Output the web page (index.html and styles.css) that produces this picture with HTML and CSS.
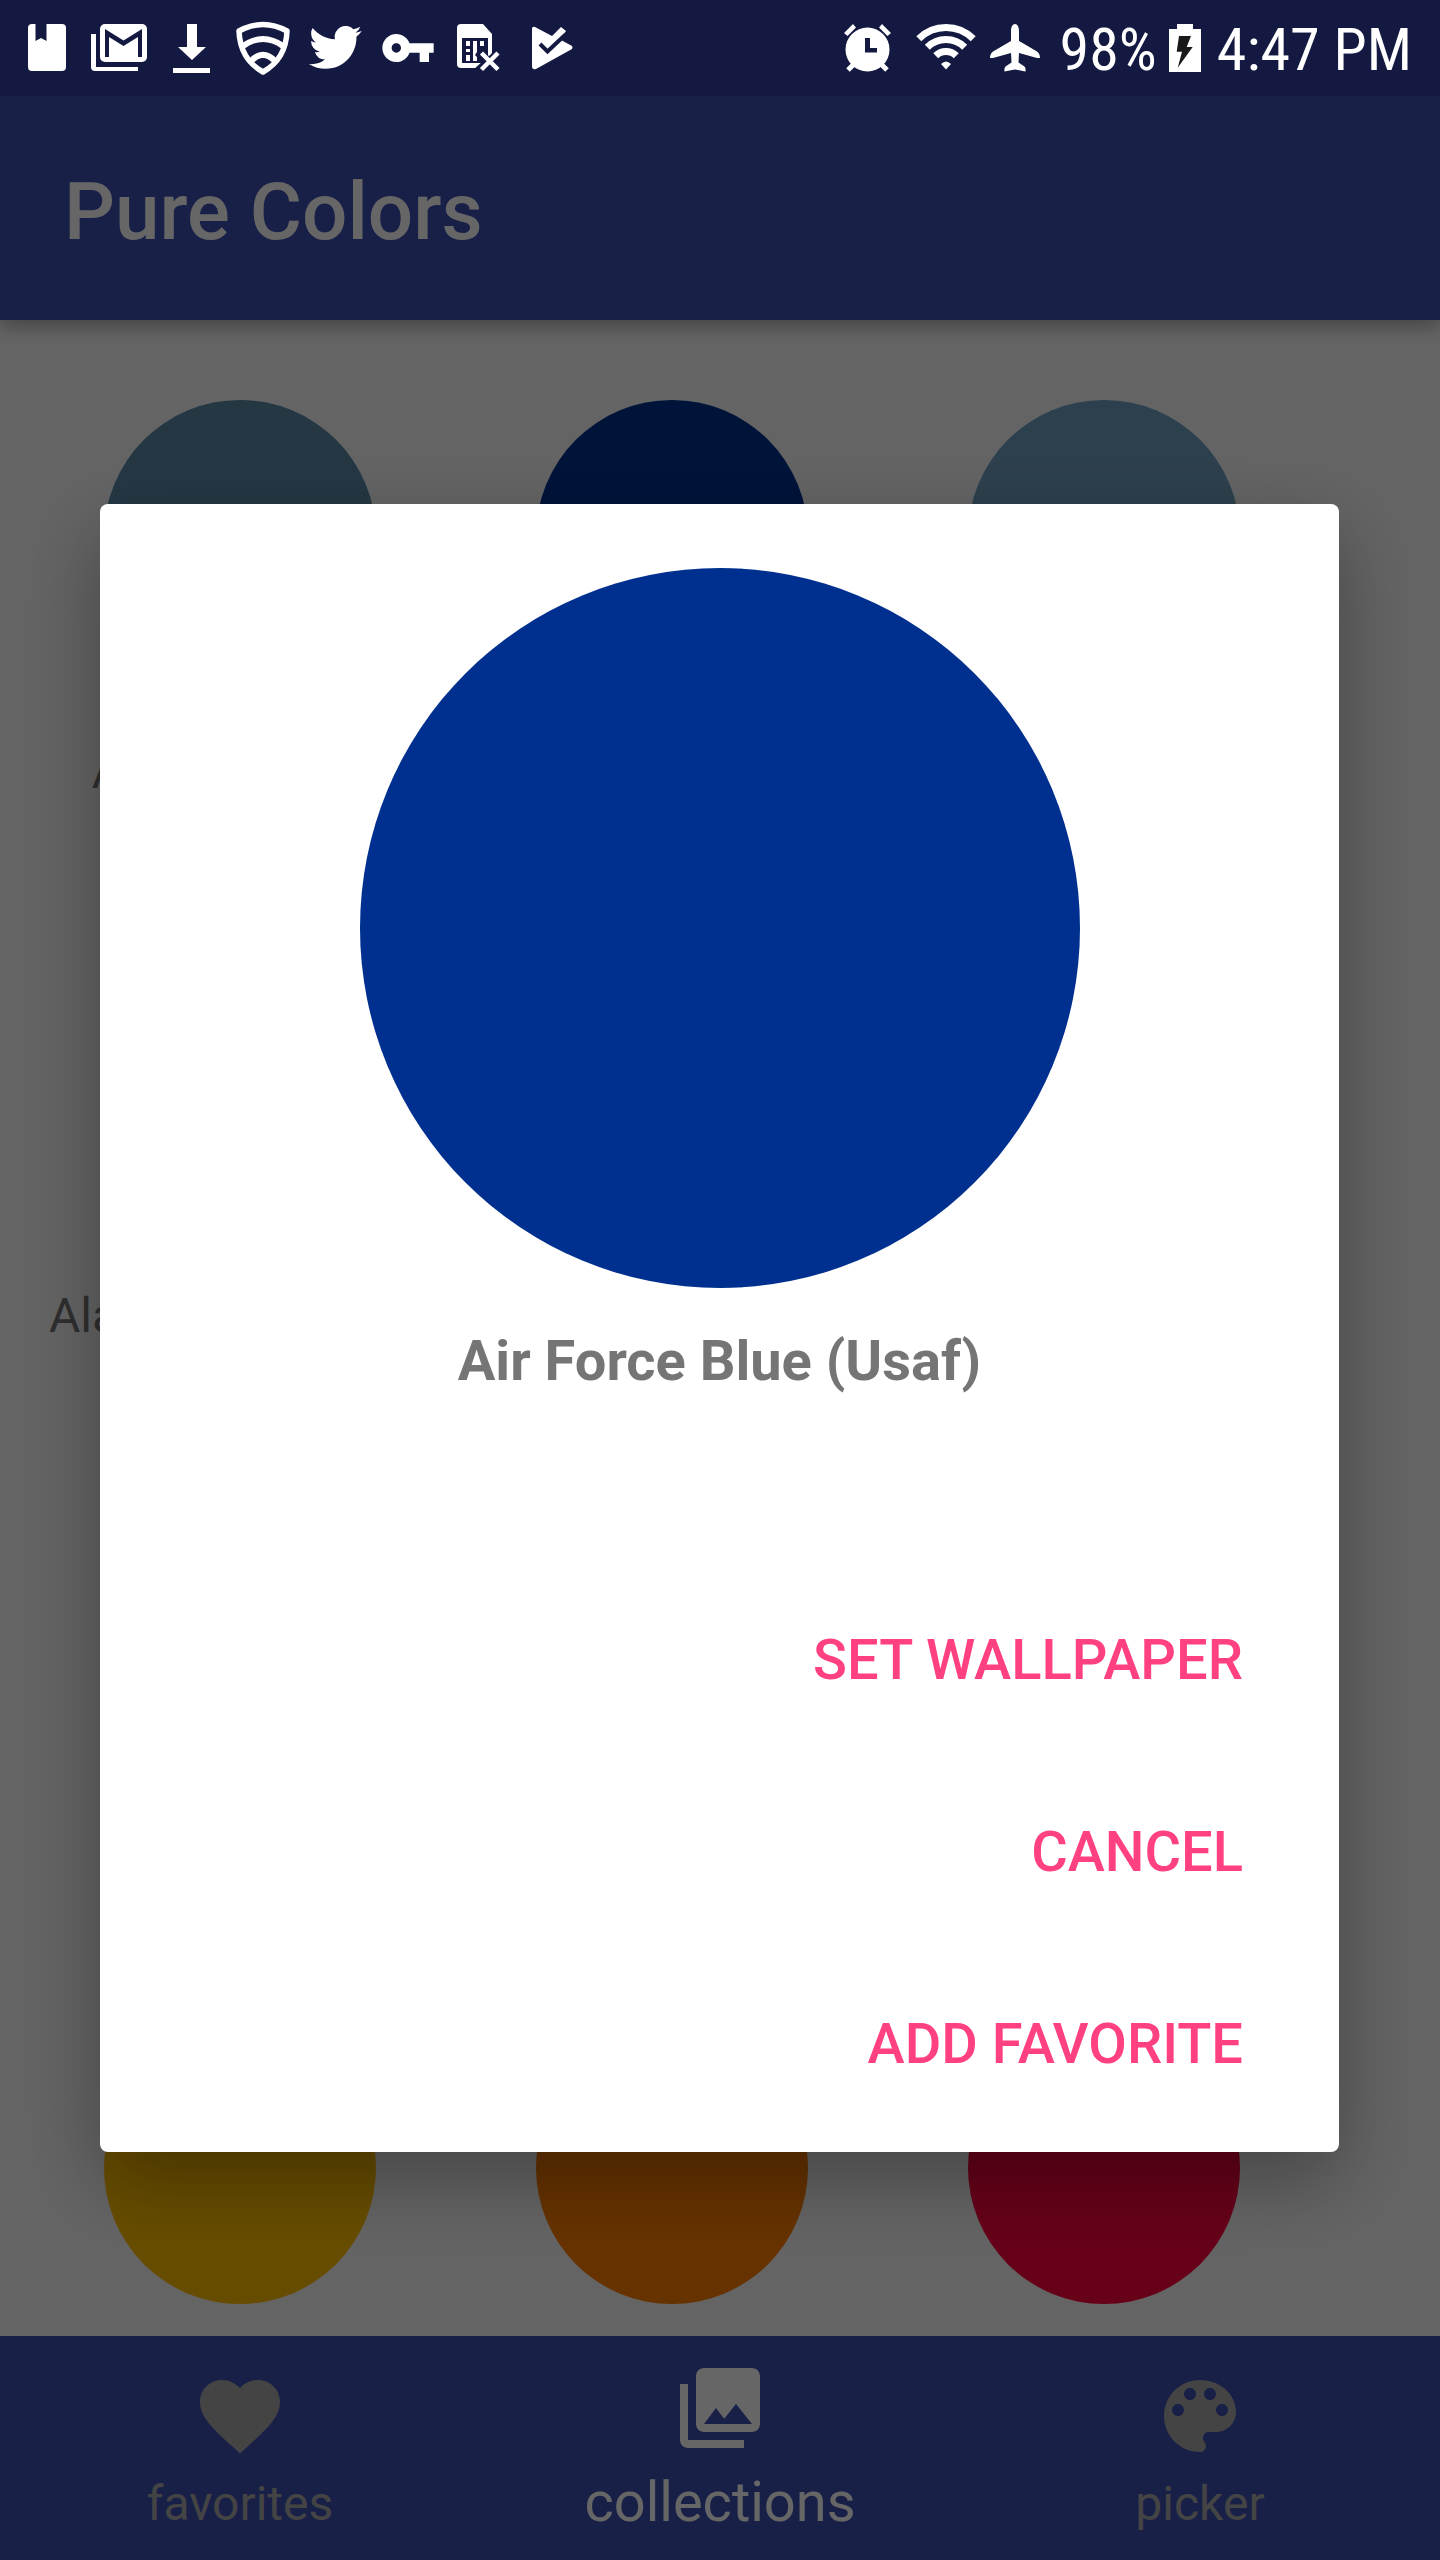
FILE: index.html
```html
<!DOCTYPE html>
<html lang="en">
<head>
<meta charset="utf-8">
<meta name="viewport" content="width=device-width, initial-scale=1">
<title>Pure Colors</title>
<link rel="stylesheet" href="styles.css">
</head>
<body>
<div class="app">
  <div class="status-bar">
    <div class="status-notifications">
      <svg class="status-icon" viewBox="0 0 56 56"><path d="M12 4H15.500V21L21 18L26.500 21V4H42Q46 4 46 8V47Q46 51 42 51H12Q8 51 8 47V8Q8 4 12 4Z"/></svg>
      <svg class="status-icon" viewBox="0 0 56 56"><rect x="8" y="4" width="47" height="38" rx="5"/><path d="M-1 14H4V47H46V51H3Q-1 51 -1 47Z"/><path class="cutout" d="M13 37V9L31.500 20.500L50 9V37H46V17L31.500 26L17 17V37Z"/></svg>
      <svg class="status-icon" viewBox="0 0 56 56"><path d="M23 4H33V27H42L28 40L14 27H23ZM9 48H46V53H9Z"/></svg>
      <svg class="status-icon" viewBox="0 0 56 56"><path class="line" stroke-width="5.500" stroke-linejoin="round" d="M3 11Q27 -2 51 11Q50 39 27 52Q4 39 3 11Z"/><path class="line" stroke-width="6" d="M7 26Q27 12 47 26M15 41Q27 29 39 41"/></svg>
      <svg class="status-icon" viewBox="0 0 56 56"><path transform="translate(1 1) scale(2.2)" d="M23.953 4.57a10 10 0 01-2.825.775 4.958 4.958 0 002.163-2.723c-.951.555-2.005.959-3.127 1.184a4.92 4.92 0 00-8.384 4.482C7.69 8.095 4.067 6.13 1.64 3.162a4.822 4.822 0 00-.666 2.475c0 1.71.87 3.213 2.188 4.096a4.904 4.904 0 01-2.228-.616v.06a4.923 4.923 0 003.946 4.827 4.996 4.996 0 01-2.212.085 4.936 4.936 0 004.604 3.417 9.867 9.867 0 01-6.102 2.105c-.39 0-.779-.023-1.17-.067a13.995 13.995 0 007.557 2.209c9.053 0 13.998-7.496 13.998-13.985 0-.21 0-.42-.015-.63A9.935 9.935 0 0024 4.59z"/></svg>
      <svg class="status-icon" viewBox="0 0 24 24"><path d="M12.650 10C11.830 7.670 9.610 6 7 6c-3.310 0-6 2.690-6 6s2.690 6 6 6c2.610 0 4.830-1.670 5.650-4H17v4h4v-4h2v-4H12.650zM7 14c-1.100 0-2-.9-2-2s.9-2 2-2 2 .9 2 2-.9 2-2 2z"/></svg>
      <svg class="status-icon" viewBox="0 0 56 56"><path d="M9 4H31L40 14V48H9Q5 48 5 44V8Q5 4 9 4Z"/><path class="cutout" d="M10 18H36V43H10Z"/><path d="M14 21H18V26H14ZM14 29H18V32H14ZM14 35H18V41H14ZM21 21H25V32L23 35L25 37V41H21ZM28 21H32V26H28Z"/><path class="cutout" d="M21 50L32 40L28 34L30 30L37 36L42 31V50Z"/><path class="line" stroke-width="4.500" d="M29.500 33L46 49.500M46 33L29.500 49.500"/></svg>
      <svg class="status-icon" viewBox="0 0 56 56"><path d="M8 9Q8 6 11 7L28 16L37 7L42 11L36 19L38 20.500L48 26Q49 27.500 48 29L12 49Q8 50 8 46Z"/><path class="gap-line" stroke-width="4" d="M16 24L23.500 31.500L41 15"/></svg>
    </div>
    <div class="status-system">
      <svg class="alarm" viewBox="0 0 48 48"><circle cx="23.500" cy="25.500" r="22"/><path d="M0 9L9 0L12 3.500L3.500 12ZM47 9L38 0L35 3.500L43.500 12Z"/><path class="line" stroke-width="5" d="M10 40L4 46M37 40L43 46"/><path class="cutout" d="M21 14H26V24H33V28.500H21Z"/></svg>
      <svg class="wifi" viewBox="0 0 60 48"><path class="line" stroke-width="7" d="M2.800 14.800A38.500 38.500 0 0 1 57.200 14.800M11.300 23.300A26.500 26.500 0 0 1 48.700 23.300M19.750 31.750A14.500 14.500 0 0 1 40.250 31.750"/><path d="M25 40Q30 35 35 40L30 45.500Z"/></svg>
      <svg class="plane" viewBox="0 0 50 48"><path d="M25 0C27.500 0 29 3 29 7V17L47 27.500Q50 29.500 50 34L47 34L29 29L28.500 38.500L34.500 42.500Q36 44 35.500 47.500L25 45.500L14.500 47.500Q14 44 15.500 42.500L21.500 38.500L21 29L3 34L0 34Q0 29.500 3 27.500L21 17V7C21 3 22.500 0 25 0Z"/></svg>
      <span class="status-text">98%</span>
      <svg class="battery" viewBox="0 0 32 48"><path d="M8 0H24V5H32V48H0V5H8Z"/><path class="bolt" d="M10 12H22L17.700 23H23.700L8.700 43.700L13 27.700H7.700Z"/></svg>
      <time class="status-text">4:47 PM</time>
    </div>
  </div>

  <header class="toolbar"><h1>Pure Colors</h1></header>

  <main class="colors">
    <figure class="color"><span class="swatch raf"></span><figcaption>Air Force Blue (Raf)</figcaption></figure>
    <figure class="color"><span class="swatch usaf"></span><figcaption>Air Force Blue (Usaf)</figcaption></figure>
    <figure class="color"><span class="swatch superiority"></span><figcaption>Air Superiority Blue</figcaption></figure>
    <figure class="color"><span class="swatch alabama"></span><figcaption>Alabama Crimson</figcaption></figure>
    <figure class="color"><span class="swatch alice"></span><figcaption>Alice Blue</figcaption></figure>
    <figure class="color"><span class="swatch alizarin"></span><figcaption>Alizarin Crimson</figcaption></figure>
    <figure class="color"><span class="swatch alloy"></span><figcaption>Alloy Orange</figcaption></figure>
    <figure class="color"><span class="swatch almond"></span><figcaption>Almond</figcaption></figure>
    <figure class="color"><span class="swatch amaranth"></span><figcaption>Amaranth</figcaption></figure>
    <figure class="color"><span class="swatch amber"></span><figcaption>Amber</figcaption></figure>
    <figure class="color"><span class="swatch sae"></span><figcaption>Amber (Sae/Ece)</figcaption></figure>
    <figure class="color"><span class="swatch rose"></span><figcaption>American Rose</figcaption></figure>
  </main>

  <nav class="bottom-nav">
    <a href="#favorites"><svg viewBox="0 0 24 24"><path d="M12 21.350l-1.450-1.320C5.400 15.360 2 12.280 2 8.500 2 5.420 4.420 3 7.500 3c1.740 0 3.410.81 4.500 2.090C13.090 3.810 14.760 3 16.500 3 19.580 3 22 5.420 22 8.500c0 3.780-3.400 6.860-8.550 11.540L12 21.350z"/></svg><span>favorites</span></a>
    <a href="#collections" class="active" aria-current="page"><svg viewBox="0 0 24 24"><path d="M22 16V4c0-1.100-.9-2-2-2H8c-1.100 0-2 .9-2 2v12c0 1.100.9 2 2 2h12c1.100 0 2-.9 2-2zm-11-4l2.030 2.710L16 11l4 5H8l3-4zM2 6v14c0 1.100.9 2 2 2h14v-2H4V6H2z"/></svg><span>collections</span></a>
    <a href="#picker"><svg viewBox="0 0 24 24"><path d="M12 3c-4.970 0-9 4.030-9 9s4.030 9 9 9c.83 0 1.500-.67 1.500-1.500 0-.39-.15-.74-.39-1.010-.23-.26-.38-.61-.38-.99 0-.83.67-1.500 1.500-1.500H16c2.760 0 5-2.240 5-5 0-4.420-4.030-8-9-8zm-5.500 9c-.83 0-1.500-.67-1.500-1.500S5.670 9 6.500 9 8 9.670 8 10.500 7.330 12 6.500 12zm3-4C8.670 8 8 7.330 8 6.500S8.670 5 9.500 5s1.500.67 1.500 1.500S10.330 8 9.500 8zm5 0c-.83 0-1.500-.67-1.500-1.500S13.670 5 14.500 5s1.500.67 1.500 1.500S15.330 8 14.500 8zm3 4c-.83 0-1.500-.67-1.500-1.500S16.670 9 17.500 9s1.500.67 1.500 1.500-.67 1.500-1.500 1.500z"/></svg><span>picker</span></a>
  </nav>
</div>

<div class="scrim">
  <section class="dialog" role="dialog" aria-modal="true" aria-labelledby="color-name">
    <div class="preview"></div>
    <h2 id="color-name">Air Force Blue (Usaf)</h2>
    <div class="actions">
      <button type="button">SET WALLPAPER</button>
      <button type="button">CANCEL</button>
      <button type="button">ADD FAVORITE</button>
    </div>
  </section>
</div>
</body>
</html>
```

FILE: styles.css
```css
* {
  box-sizing: border-box;
}

body {
  margin: 0;
  font-family: Roboto, "Liberation Sans", sans-serif;
  background: #fafafa;
}

h1,
h2,
figure {
  margin: 0;
}

.app {
  display: flex;
  flex-direction: column;
  height: 100vh;
}

/* Status bar: stays above the scrim */
.status-bar {
  position: relative;
  z-index: 3;
  flex: none;
  display: flex;
  align-items: center;
  justify-content: space-between;
  height: 96px;
  padding: 0 28px 0 20px;
  background: #131940;
  color: #fff;
  font-family: "Roboto Condensed", Roboto, "Liberation Sans", sans-serif;
  font-size: 60px;
  line-height: 72px;
  white-space: nowrap;
}

.status-bar svg {
  display: block;
  flex: none;
  fill: #fff;
  overflow: visible;
}

.status-bar .cutout {
  fill: #131940;
}

.status-bar .line {
  fill: none;
  stroke: #fff;
}

.status-bar .gap-line {
  fill: none;
  stroke: #131940;
}

.status-bar .bolt {
  fill: #191919;
}

.status-notifications,
.status-system {
  display: flex;
  align-items: center;
}

.status-notifications {
  gap: 16px;
}

.status-text {
  padding-top: 4px;
}

.status-icon {
  width: 56px;
  height: 56px;
}

.alarm {
  width: 48px;
  height: 48px;
  margin-right: 24px;
}

.wifi {
  width: 60px;
  height: 48px;
  margin-right: 14px;
}

.plane {
  width: 50px;
  height: 48px;
  margin-right: 20px;
}

.battery {
  width: 32px;
  height: 48px;
  margin: 0 16px 0 12px;
}

/* Toolbar */
.toolbar {
  position: relative;
  z-index: 1;
  flex: none;
  display: flex;
  align-items: center;
  height: 224px;
  padding: 8px 64px 0;
  background: #3f51b5;
  box-shadow: 0 8px 16px rgba(0, 0, 0, 0.28);
}

.toolbar h1 {
  color: #fff;
  font-size: 80px;
  font-weight: 500;
  line-height: 96px;
}

/* Colour grid */
.colors {
  flex: 1;
  min-height: 0;
  overflow-y: auto;
  scrollbar-width: none;
  display: grid;
  grid-template-columns: repeat(3, 1fr);
  grid-auto-rows: 544px;
  padding: 80px 120px 0 24px;
}

.color {
  display: flex;
  flex-direction: column;
  align-items: center;
  gap: 72px;
  padding: 0 16px;
  color: #757575;
  font-size: 48px;
  line-height: 56px;
  text-align: center;
}

.swatch {
  flex: none;
  width: 272px;
  height: 272px;
  border-radius: 50%;
}

.raf { background: #5d8aa8; }
.usaf { background: #00308f; }
.superiority { background: #72a0c1; }
.alabama { background: #af002a; }
.alice { background: #f0f8ff; }
.alizarin { background: #e32636; }
.alloy { background: #c46210; }
.almond { background: #efdecd; }
.amaranth { background: #e52b50; }
.amber { background: #ffbf00; }
.sae { background: #ff7e00; }
.rose { background: #ff033e; }

/* Bottom navigation */
.bottom-nav {
  flex: none;
  display: grid;
  grid-template-columns: repeat(3, 1fr);
  height: 224px;
  background: #3f51b5;
}

.bottom-nav a {
  display: flex;
  flex-direction: column;
  align-items: center;
  justify-content: space-between;
  padding: 32px 0 28px;
  color: #aaa;
  font-size: 48px;
  line-height: 56px;
  text-decoration: none;
}

.bottom-nav .active {
  padding: 24px 0 26px;
  color: #fff;
  font-size: 56px;
  line-height: 64px;
}

.bottom-nav svg {
  width: 96px;
  height: 96px;
  fill: currentColor;
}

/* Dialog */
.scrim {
  position: fixed;
  inset: 0;
  z-index: 2;
  display: flex;
  align-items: center;
  justify-content: center;
  padding: 96px 101px 0 100px;
  background: rgba(0, 0, 0, 0.6);
}

.dialog {
  flex: 1;
  display: flex;
  flex-direction: column;
  align-items: center;
  padding: 64px 32px 12px;
  border-radius: 8px;
  background: #fff;
  box-shadow: 0 28px 80px rgba(0, 0, 0, 0.32);
}

.preview {
  width: 720px;
  max-width: 100%;
  aspect-ratio: 1;
  border-radius: 50%;
  background: #00308f;
}

.dialog h2 {
  margin-top: 40px;
  color: #757575;
  font-size: 56px;
  font-weight: 700;
  line-height: 66px;
}

.actions {
  align-self: stretch;
  display: flex;
  flex-direction: column;
  align-items: flex-end;
  margin-top: 170px;
}

.actions button {
  height: 192px;
  padding: 0 64px;
  border: 0;
  background: none;
  color: #ff4081;
  font: 500 56px/64px Roboto, "Liberation Sans", sans-serif;
  cursor: pointer;
}
```
